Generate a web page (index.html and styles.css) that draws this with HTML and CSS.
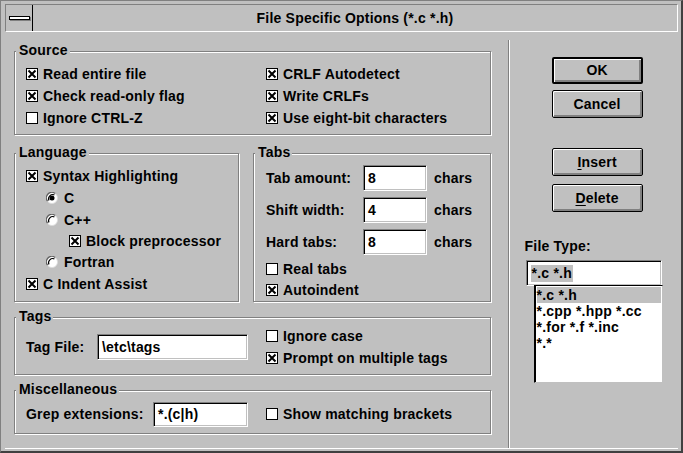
FILE: index.html
```html
<!DOCTYPE html>
<html>
<head>
<meta charset="utf-8">
<title>File Specific Options</title>
<link rel="stylesheet" href="styles.css">
</head>
<body>
<div class="window">
  <div class="titlebar">
    <div class="sysmenu"><span class="sysbar"></span></div>
    <div class="title">File Specific Options (*.c *.h)</div>
  </div>
  <div class="client">
    <div class="main">
      <div class="group source">
        <span class="legend">Source</span>
        <div class="cols">
          <div class="col col-left">
            <div class="row"><svg class="cb" width="12" height="12" viewBox="0 0 12 12"><rect x=".5" y=".5" width="11" height="11" fill="#fff" stroke="#000"/><path d="M2.5 2.5l7 7M9.5 2.5l-7 7" stroke="#000" stroke-width="2"/></svg>Read entire file</div>
            <div class="row"><svg class="cb" width="12" height="12" viewBox="0 0 12 12"><rect x=".5" y=".5" width="11" height="11" fill="#fff" stroke="#000"/><path d="M2.5 2.5l7 7M9.5 2.5l-7 7" stroke="#000" stroke-width="2"/></svg>Check read-only flag</div>
            <div class="row"><svg class="cb" width="12" height="12" viewBox="0 0 12 12"><rect x=".5" y=".5" width="11" height="11" fill="#fff" stroke="#000"/></svg>Ignore CTRL-Z</div>
          </div>
          <div class="col">
            <div class="row"><svg class="cb" width="12" height="12" viewBox="0 0 12 12"><rect x=".5" y=".5" width="11" height="11" fill="#fff" stroke="#000"/><path d="M2.5 2.5l7 7M9.5 2.5l-7 7" stroke="#000" stroke-width="2"/></svg>CRLF Autodetect</div>
            <div class="row"><svg class="cb" width="12" height="12" viewBox="0 0 12 12"><rect x=".5" y=".5" width="11" height="11" fill="#fff" stroke="#000"/><path d="M2.5 2.5l7 7M9.5 2.5l-7 7" stroke="#000" stroke-width="2"/></svg>Write CRLFs</div>
            <div class="row"><svg class="cb" width="12" height="12" viewBox="0 0 12 12"><rect x=".5" y=".5" width="11" height="11" fill="#fff" stroke="#000"/><path d="M2.5 2.5l7 7M9.5 2.5l-7 7" stroke="#000" stroke-width="2"/></svg>Use eight-bit characters</div>
          </div>
        </div>
      </div>

      <div class="pair">
        <div class="group language">
          <span class="legend">Language</span>
          <div class="row"><svg class="cb" width="12" height="12" viewBox="0 0 12 12"><rect x=".5" y=".5" width="11" height="11" fill="#fff" stroke="#000"/><path d="M2.5 2.5l7 7M9.5 2.5l-7 7" stroke="#000" stroke-width="2"/></svg>Syntax Highlighting</div>
          <div class="row ind1"><svg class="rb" width="12" height="12" viewBox="0 0 12 12"><circle cx="6" cy="6" r="5.5" fill="#fff" stroke="#dcdcdc" stroke-width=".8"/><path d="M1.6 9.2A5.4 5.4 0 0 1 9.2 1.6" fill="none" stroke="#606060" stroke-width="1.3"/><path d="M2.9 8.4A4.2 4.2 0 0 1 8.4 2.9" fill="none" stroke="#000" stroke-width="1.2"/><circle cx="6" cy="6" r="2.5" fill="#000"/></svg>C</div>
          <div class="row ind1"><svg class="rb" width="12" height="12" viewBox="0 0 12 12"><circle cx="6" cy="6" r="5.5" fill="#fff" stroke="#dcdcdc" stroke-width=".8"/><path d="M1.6 9.2A5.4 5.4 0 0 1 9.2 1.6" fill="none" stroke="#606060" stroke-width="1.3"/><path d="M2.9 8.4A4.2 4.2 0 0 1 8.4 2.9" fill="none" stroke="#000" stroke-width="1.2"/></svg>C++</div>
          <div class="row ind2 short"><svg class="cb" width="12" height="12" viewBox="0 0 12 12"><rect x=".5" y=".5" width="11" height="11" fill="#fff" stroke="#000"/><path d="M2.5 2.5l7 7M9.5 2.5l-7 7" stroke="#000" stroke-width="2"/></svg>Block preprocessor</div>
          <div class="row ind1"><svg class="rb" width="12" height="12" viewBox="0 0 12 12"><circle cx="6" cy="6" r="5.5" fill="#fff" stroke="#dcdcdc" stroke-width=".8"/><path d="M1.6 9.2A5.4 5.4 0 0 1 9.2 1.6" fill="none" stroke="#606060" stroke-width="1.3"/><path d="M2.9 8.4A4.2 4.2 0 0 1 8.4 2.9" fill="none" stroke="#000" stroke-width="1.2"/></svg>Fortran</div>
          <div class="row"><svg class="cb" width="12" height="12" viewBox="0 0 12 12"><rect x=".5" y=".5" width="11" height="11" fill="#fff" stroke="#000"/><path d="M2.5 2.5l7 7M9.5 2.5l-7 7" stroke="#000" stroke-width="2"/></svg>C Indent Assist</div>
        </div>

        <div class="group tabs">
          <span class="legend">Tabs</span>
          <div class="trow"><span class="tlabel">Tab amount:</span><span class="edit tedit">8</span><span class="unit">chars</span></div>
          <div class="trow"><span class="tlabel">Shift width:</span><span class="edit tedit">4</span><span class="unit">chars</span></div>
          <div class="trow"><span class="tlabel">Hard tabs:</span><span class="edit tedit">8</span><span class="unit">chars</span></div>
          <div class="row trow-cb"><svg class="cb" width="12" height="12" viewBox="0 0 12 12"><rect x=".5" y=".5" width="11" height="11" fill="#fff" stroke="#000"/></svg>Real tabs</div>
          <div class="row trow-cb"><svg class="cb" width="12" height="12" viewBox="0 0 12 12"><rect x=".5" y=".5" width="11" height="11" fill="#fff" stroke="#000"/><path d="M2.5 2.5l7 7M9.5 2.5l-7 7" stroke="#000" stroke-width="2"/></svg>Autoindent</div>
        </div>
      </div>

      <div class="group tags">
        <span class="legend">Tags</span>
        <div class="field tagfield"><span class="flabel tag-label">Tag File:</span><span class="edit tag-edit">\etc\tags</span></div>
        <div class="col">
          <div class="row"><svg class="cb" width="12" height="12" viewBox="0 0 12 12"><rect x=".5" y=".5" width="11" height="11" fill="#fff" stroke="#000"/></svg>Ignore case</div>
          <div class="row"><svg class="cb" width="12" height="12" viewBox="0 0 12 12"><rect x=".5" y=".5" width="11" height="11" fill="#fff" stroke="#000"/><path d="M2.5 2.5l7 7M9.5 2.5l-7 7" stroke="#000" stroke-width="2"/></svg>Prompt on multiple tags</div>
        </div>
      </div>

      <div class="group misc">
        <span class="legend">Miscellaneous</span>
        <div class="field"><span class="flabel grep-label">Grep extensions:</span><span class="edit grep-edit">*.(c|h)</span></div>
        <div class="row misc-row"><svg class="cb" width="12" height="12" viewBox="0 0 12 12"><rect x=".5" y=".5" width="11" height="11" fill="#fff" stroke="#000"/></svg>Show matching brackets</div>
      </div>
    </div>

    <div class="side">
      <div class="btn default ok">OK</div>
      <div class="btn cancel">Cancel</div>
      <div class="btn insert"><u>I</u>nsert</div>
      <div class="btn delete"><u>D</u>elete</div>
      <div class="ftlabel">File Type:</div>
      <div class="edit combo"><span class="sel">*.c *.h</span></div>
      <div class="list">
        <div class="item selitem">*.c *.h</div>
        <div class="item">*.cpp *.hpp *.cc</div>
        <div class="item">*.for *.f *.inc</div>
        <div class="item">*.*</div>
      </div>
    </div>
  </div>
</div>
</body>
</html>
```

FILE: styles.css
```css
* { box-sizing: border-box; }
html, body { margin: 0; padding: 0; }
body {
  background: #c0c0c0;
  font-family: "Liberation Sans", Arial, sans-serif;
  font-weight: bold;
  font-size: 14px;
  letter-spacing: 0.2px;
  color: #000;
}
.window {
  width: 683px;
  height: 453px;
  border: 1px solid #808080;
  border-right: 2px solid #404040;
  border-bottom: 2px solid #404040;
  padding: 3px 3px 2px 4px;
  display: flex;
  flex-direction: column;
}
.titlebar {
  height: 28px;
  flex: none;
  display: flex;
  border: 1px solid;
  border-color: #808080 #fff #fff #808080;
}
.sysmenu {
  width: 27px;
  border-right: 1px solid #000;
  display: flex;
  align-items: center;
  justify-content: center;
}
.sysbar {
  width: 21px;
  height: 4px;
  background: #fff;
  border: 1px solid #000;
  box-shadow: 1px 1px #808080;
}
.title {
  flex: 1;
  text-align: center;
  line-height: 26px;
}
.client {
  flex: 1;
  display: flex;
  border-bottom: 1px solid #fff;
}
.main {
  width: 505px;
  padding: 19px 0 0 9px;
}
.group {
  position: relative;
  border: 1px solid #808080;
  box-shadow: inset 1px 1px #fff, 1px 1px #fff;
}
.legend {
  position: absolute;
  left: 1px;
  top: -10px;
  padding: 0 2px 0 3px;
  line-height: 16px;
  background: #c0c0c0;
}
.row {
  height: 22px;
  display: flex;
  align-items: center;
  white-space: nowrap;
}
.cb { flex: none; margin-right: 5px; }
.rb { flex: none; margin-right: 6px; }

.source {
  width: 477px;
  height: 84px;
  padding: 11px 0 0 11px;
}
.cols { display: flex; }
.col-left { width: 240px; }

.pair {
  display: flex;
  margin-top: 18px;
  gap: 14px;
}
.language {
  width: 225px;
  height: 149px;
  padding: 11px 0 0 11px;
}
.ind1 { padding-left: 20px; }
.ind2 { padding-left: 43px; }
.short { height: 20px; }

.tabs {
  width: 238px;
  height: 149px;
  padding: 8px 0 0 12px;
}
.trow {
  height: 32px;
  display: flex;
  align-items: center;
}
.tlabel { width: 97px; }
.trow-cb { height: 21px; }
.edit {
  background: #fff;
  border: 1px solid;
  border-color: #808080 #fff #fff #808080;
  box-shadow: inset 1px 1px #000, inset -1px -1px #c0c0c0;
  display: flex;
  align-items: center;
  padding-left: 4px;
  white-space: nowrap;
}
.tedit { width: 64px; height: 26px; }
.unit { margin-left: 7px; }

.tags {
  width: 477px;
  height: 58px;
  margin-top: 15px;
  padding: 7px 0 0 11px;
  display: flex;
}
.field {
  width: 240px;
  display: flex;
  align-items: center;
}
.tagfield { height: 44px; }
.tag-label { width: 71px; }
.tag-edit { width: 151px; height: 26px; }

.misc {
  width: 477px;
  height: 44px;
  margin-top: 15px;
  padding: 10px 0 0 11px;
  display: flex;
}
.misc .field { height: 26px; }
.grep-label { width: 127px; }
.grep-edit { width: 95px; height: 25px; }
.misc-row { height: 26px; }

.side {
  width: 171px;
  margin-top: 8px;
  border-left: 1px solid #808080;
  box-shadow: inset 1px 0 #fff;
  padding: 17px 0 0 43px;
}
.btn {
  width: 91px;
  height: 28px;
  border: 1px solid #000;
  border-radius: 2px;
  background: #c0c0c0;
  box-shadow: inset 1px 1px #fff, inset -2px -2px #808080;
  display: flex;
  align-items: center;
  justify-content: center;
  padding-bottom: 1px;
}
.btn.default { border-width: 2px; height: 27px; }
.cancel { margin-top: 6px; }
.insert { margin-top: 30px; }
.delete { margin-top: 8px; }
.btn u { text-decoration-thickness: 1px; text-underline-offset: 2px; }

.ftlabel {
  margin: 26px 0 0 -27px;
  line-height: 16px;
}
.combo {
  margin: 6px 0 0 -26px;
  width: 136px;
  height: 26px;
  padding-left: 4px;
}
.sel { background: #c0c0c0; padding: 0 1px; line-height: 17px; }
.list {
  margin: -1px 0 0 -18px;
  width: 129px;
  height: 98px;
  background: #fff;
  border: 1px solid;
  border-color: #000 #c0c0c0 #c0c0c0 #000;
  box-shadow: inset 1px 0 #000;
  padding: 1px 0 0 2px;
}
.item { line-height: 16px; white-space: nowrap; }
.selitem { background: #c0c0c0; margin-right: 1px; }
```
